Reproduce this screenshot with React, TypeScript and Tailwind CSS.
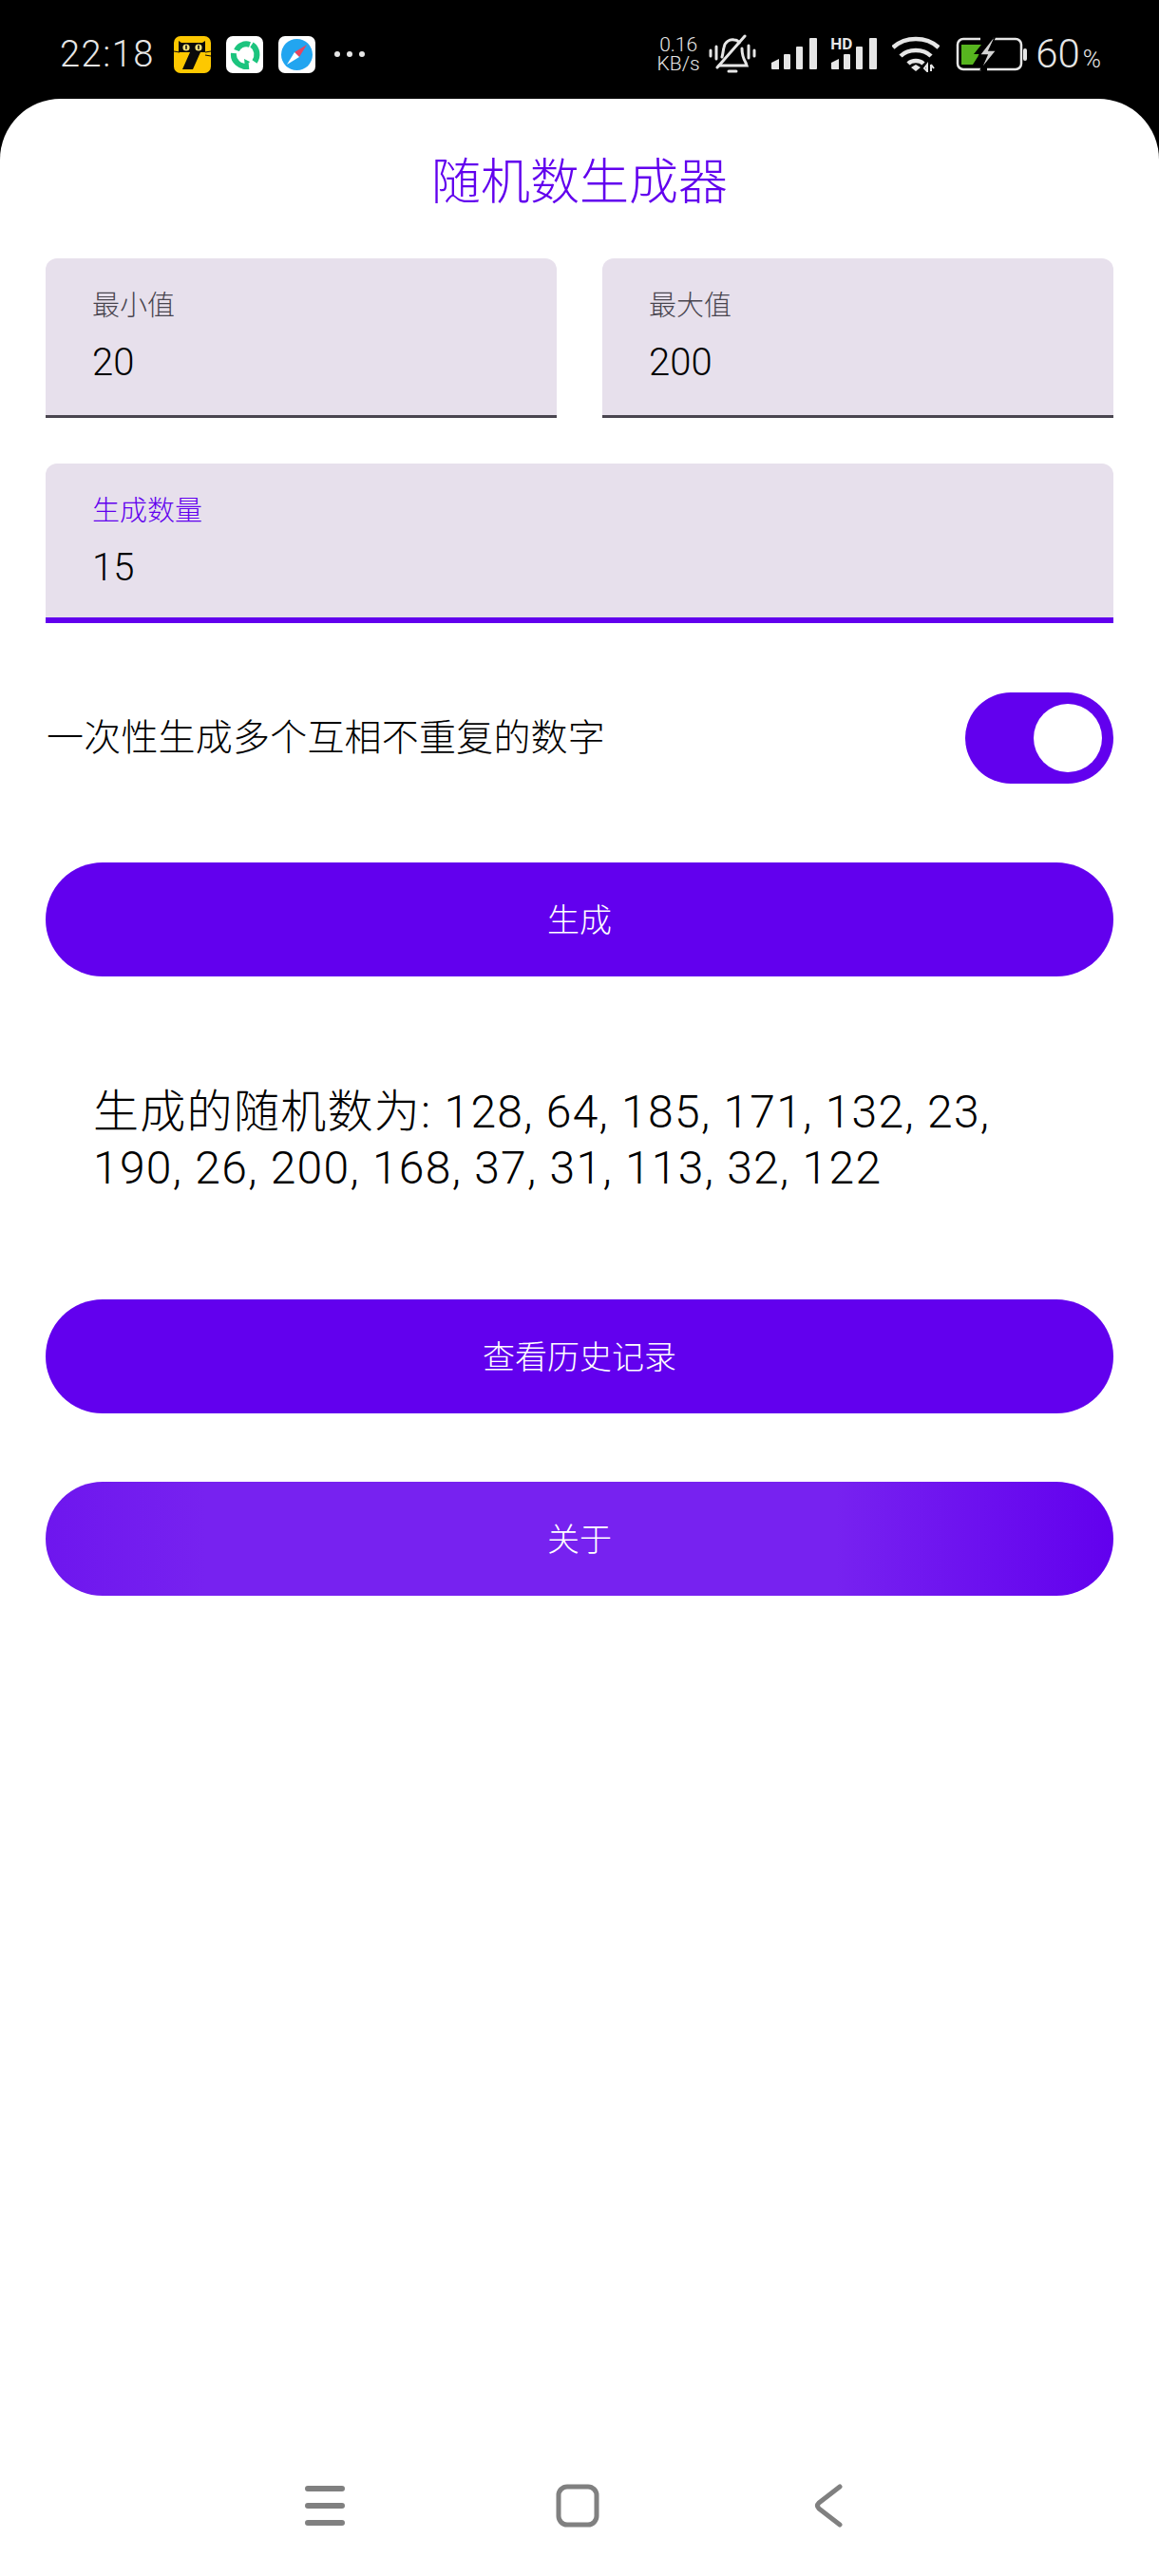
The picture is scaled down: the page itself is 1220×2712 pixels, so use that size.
const fontStack = "font-['Roboto','Noto_Sans_CJK_SC',sans-serif]";

function CatIcon() {
  return (
    <svg width="39" height="39" viewBox="0 0 39 39">
      <rect width="39" height="39" rx="7" fill="#fdc800" />
      <path d="M5 5l3 2h22l3-2v12H28L20 35H9l8-18H5z" fill="#0a0a0a" />
      <circle cx="13" cy="12" r="3.6" fill="#f4e27a" />
      <circle cx="26" cy="12" r="3.6" fill="#f4e27a" />
      <rect x="12.2" y="9.5" width="1.6" height="4.5" rx="0.8" fill="#111" />
      <rect x="25.2" y="9.5" width="1.6" height="4.5" rx="0.8" fill="#111" />
      <path d="M0 16l6 1M33 17l6-1M33 20l6 1" stroke="#0a0a0a" strokeWidth="1" />
    </svg>
  );
}

function SwirlIcon() {
  return (
    <svg width="39" height="39" viewBox="0 0 39 39">
      <rect width="39" height="39" rx="7" fill="#ffffff" />
      <g fill="none" stroke="#1cc47e" strokeWidth="6">
        <path d="M11 15c2-5 8-8 14-6" />
        <path d="M27 9c6 4 7 12 3 18" />
        <path d="M8 18c-1 8 6 15 16 14" />
      </g>
      <path d="M19 24l6 3-5 6z" fill="#1cc47e" />
    </svg>
  );
}

function CompassIcon() {
  return (
    <svg width="39" height="39" viewBox="0 0 39 39">
      <rect width="39" height="39" rx="7" fill="#ffffff" />
      <circle cx="19.5" cy="19.5" r="16.5" fill="#22a5f0" />
      <path d="M30 9l-13 8 5 5z" fill="#e8455f" />
      <path d="M9 30l8-13 5 5z" fill="#ffffff" />
    </svg>
  );
}

function BellOffIcon() {
  return (
    <svg width="50" height="42" viewBox="0 0 50 42" fill="none" stroke="#e6e6e6" strokeLinecap="round">
      <path d="M14 24c1-3 1-6 2-10 1-6 6-9 11-8 2 0 4 1 5 3" strokeWidth="3" />
      <path d="M35 15c0 6 1 10 4 15l1 3H11" strokeWidth="3" />
      <path d="M38 2L9 35" strokeWidth="3" />
      <path d="M21 39h8" strokeWidth="3" />
      <path d="M2 17v6M8 13v13M42 12v13M48 17v6" strokeWidth="3" />
    </svg>
  );
}

function SignalIcon({ hd }: { hd?: boolean }) {
  return (
    <svg width="52" height="34" viewBox="0 0 52 34" fill="#e6e6e6">
      <path d="M1 26l8-4v11H2a1 1 0 0 1-1-1z" />
      <rect x="14" y="17" width="7" height="16" rx="1" />
      <rect x="27" y="9" width="7" height="24" rx="1" />
      <rect x="41" y="0" width="8" height="33" rx="1" />
      {hd && <rect x="0" y="15" width="8" height="3" fill="#000" />}
    </svg>
  );
}

function WifiIcon() {
  return (
    <svg width="50" height="38" viewBox="0 0 50 38" fill="none" stroke="#e6e6e6" strokeWidth="4.5">
      <path d="M1 12c13-12 35-12 48 0" />
      <path d="M9 21c8-8 24-8 32 0" />
      <path d="M17 29c4-4 12-4 16 0" />
      <path d="M20 33l5-3 5 3-5 4z" fill="#e6e6e6" stroke="none" />
      <path d="M37 37v-7l-3 4zM41 30v7M41 30l3 4" strokeWidth="2" />
    </svg>
  );
}

function BatteryIcon() {
  return (
    <svg width="75" height="36" viewBox="0 0 75 36" fill="none">
      <path d="M26 2H8a6 6 0 0 0-6 6v20a6 6 0 0 0 6 6h19" stroke="#e6e6e6" strokeWidth="2.5" />
      <path d="M39 2h24a6 6 0 0 1 6 6v20a6 6 0 0 1-6 6H33" stroke="#e6e6e6" strokeWidth="2.5" />
      <path d="M6 8h21l-8 10h6l-7 11H6z" fill="#57b51f" />
      <path d="M39 1L25 19h8l-7 16 17-21h-8l6-13z" fill="#d4d4d4" stroke="#000" strokeWidth="1.5" />
      <rect x="71" y="12" width="4" height="13" rx="2" fill="#e6e6e6" />
    </svg>
  );
}

function StatusBar() {
  return (
    <div className="h-[104px] flex items-center justify-between pl-[63px] pr-[61px] pt-[10px]">
      <div className="flex items-center">
        <span className="text-[38px] leading-[40px] text-[#e6e6e6] font-light w-[120px] font-['Roboto',sans-serif] tracking-[1.5px]">22:18</span>
        <div className="flex gap-[16px]">
          <CatIcon />
          <SwirlIcon />
          <CompassIcon />
        </div>
        <div className="flex gap-[7px] ml-[20px]">
          <div className="w-[6px] h-[6px] rounded-full bg-[#e6e6e6]" />
          <div className="w-[6px] h-[6px] rounded-full bg-[#e6e6e6]" />
          <div className="w-[6px] h-[6px] rounded-full bg-[#e6e6e6]" />
        </div>
      </div>
      <div className="flex items-center text-[#e6e6e6]">
        <div className="flex flex-col items-center text-[21px] leading-[20px] font-light font-['Roboto',sans-serif] w-[44px]">
          <span>0.16</span>
          <span>KB/s</span>
        </div>
        <div className="ml-[10px]"><BellOffIcon /></div>
        <div className="ml-[15px]"><SignalIcon /></div>
        <div className="relative ml-[11px]">
          <SignalIcon hd />
          <span className="absolute left-0 top-[-2px] text-[17px] leading-[16px] font-bold font-['Roboto',sans-serif]">HD</span>
        </div>
        <div className="ml-[13px]"><WifiIcon /></div>
        <div className="ml-[17px]"><BatteryIcon /></div>
        <div className="ml-[9px] flex items-baseline font-light font-['Roboto',sans-serif]">
          <span className="text-[42px] leading-[40px]">60</span>
          <span className="ml-[3px] text-[26px] leading-[24px]">%</span>
        </div>
      </div>
    </div>
  );
}

function Field({ label, value, focused, className }: { label: string; value: string; focused?: boolean; className?: string }) {
  return (
    <div
      className={`h-[168px] bg-[#e7e0ec] rounded-t-[12px] pl-[49px] pt-[32px] ${focused ? "border-b-[6px] border-[#6200ee]" : "border-b-[3px] border-[#49454f]"} ${className ?? ""}`}
    >
      <div className={`text-[29px] leading-[36px] font-light ${focused ? "text-[#6200ee]" : "text-[#49454f]"}`}>{label}</div>
      <div className="mt-[16px] text-[40px] leading-[52px] font-light text-black">{value}</div>
    </div>
  );
}

function PillButton({ label, className }: { label: string; className: string }) {
  return (
    <div className={`h-[120px] pt-[2px] rounded-full flex items-center justify-center text-white text-[34px] font-light ${className}`}>
      {label}
    </div>
  );
}

function NavBar() {
  return (
    <div className="mt-auto h-[52px] mb-[48px] flex items-center pl-[321px]">
      <svg width="42" height="42" viewBox="0 0 42 42" stroke="#808080" strokeWidth="6" strokeLinecap="round">
        <path d="M3 3h36M3 21h36M3 39h36" />
      </svg>
      <svg className="ml-[222px]" width="46" height="46" viewBox="0 0 46 46" fill="none" stroke="#808080" strokeWidth="5">
        <rect x="3" y="3" width="40" height="40" rx="9" />
      </svg>
      <svg className="ml-[226px]" width="30" height="46" viewBox="0 0 30 46" fill="none" stroke="#808080" strokeWidth="5" strokeLinecap="round" strokeLinejoin="round">
        <path d="M27 3L5 20c-2 2-2 4 0 6l22 17" />
      </svg>
    </div>
  );
}

export default function App() {
  return (
    <div className={`w-[1220px] h-[2712px] bg-black flex flex-col ${fontStack}`}>
      <StatusBar />
      <div className="flex-1 bg-white rounded-t-[64px] flex flex-col">
        <h1 className="pt-[59px] text-center text-[52px] leading-[60px] font-light text-[#6200ee]">随机数生成器</h1>
        <div className="px-[48px] mt-[49px]">
          <div className="grid grid-cols-2 gap-[48px]">
            <Field label="最小值" value="20" />
            <Field label="最大值" value="200" />
          </div>
          <Field className="mt-[48px]" label="生成数量" value="15" focused />
          <div className="mt-[73px] flex items-center justify-between">
            <span className="pl-[1px] text-[39px] tracking-[0.2px] leading-[48px] font-light text-black">一次性生成多个互相不重复的数字</span>
            <div className="w-[156px] h-[96px] rounded-full bg-[#6200ee] flex items-center justify-end pr-[12px]">
              <div className="w-[72px] h-[72px] rounded-full bg-white" />
            </div>
          </div>
          <PillButton className="mt-[83px] bg-[#6200ee]" label="生成" />
          <div className="mt-[113px] pl-[50px] text-[48px] leading-[59px] tracking-[1.3px] font-light text-black">
            生成的随机数为: 128, 64, 185, 171, 132, 23,
            <br />
            190, 26, 200, 168, 37, 31, 113, 32, 122
          </div>
          <PillButton className="mt-[109px] bg-[#6200ee]" label="查看历史记录" />
          <PillButton
            className="mt-[72px] bg-[linear-gradient(90deg,#6e16ee_0%,#7722f0_15%,#7722f0_74%,#6200ee_100%)]"
            label="关于"
          />
        </div>
        <NavBar />
      </div>
    </div>
  );
}
